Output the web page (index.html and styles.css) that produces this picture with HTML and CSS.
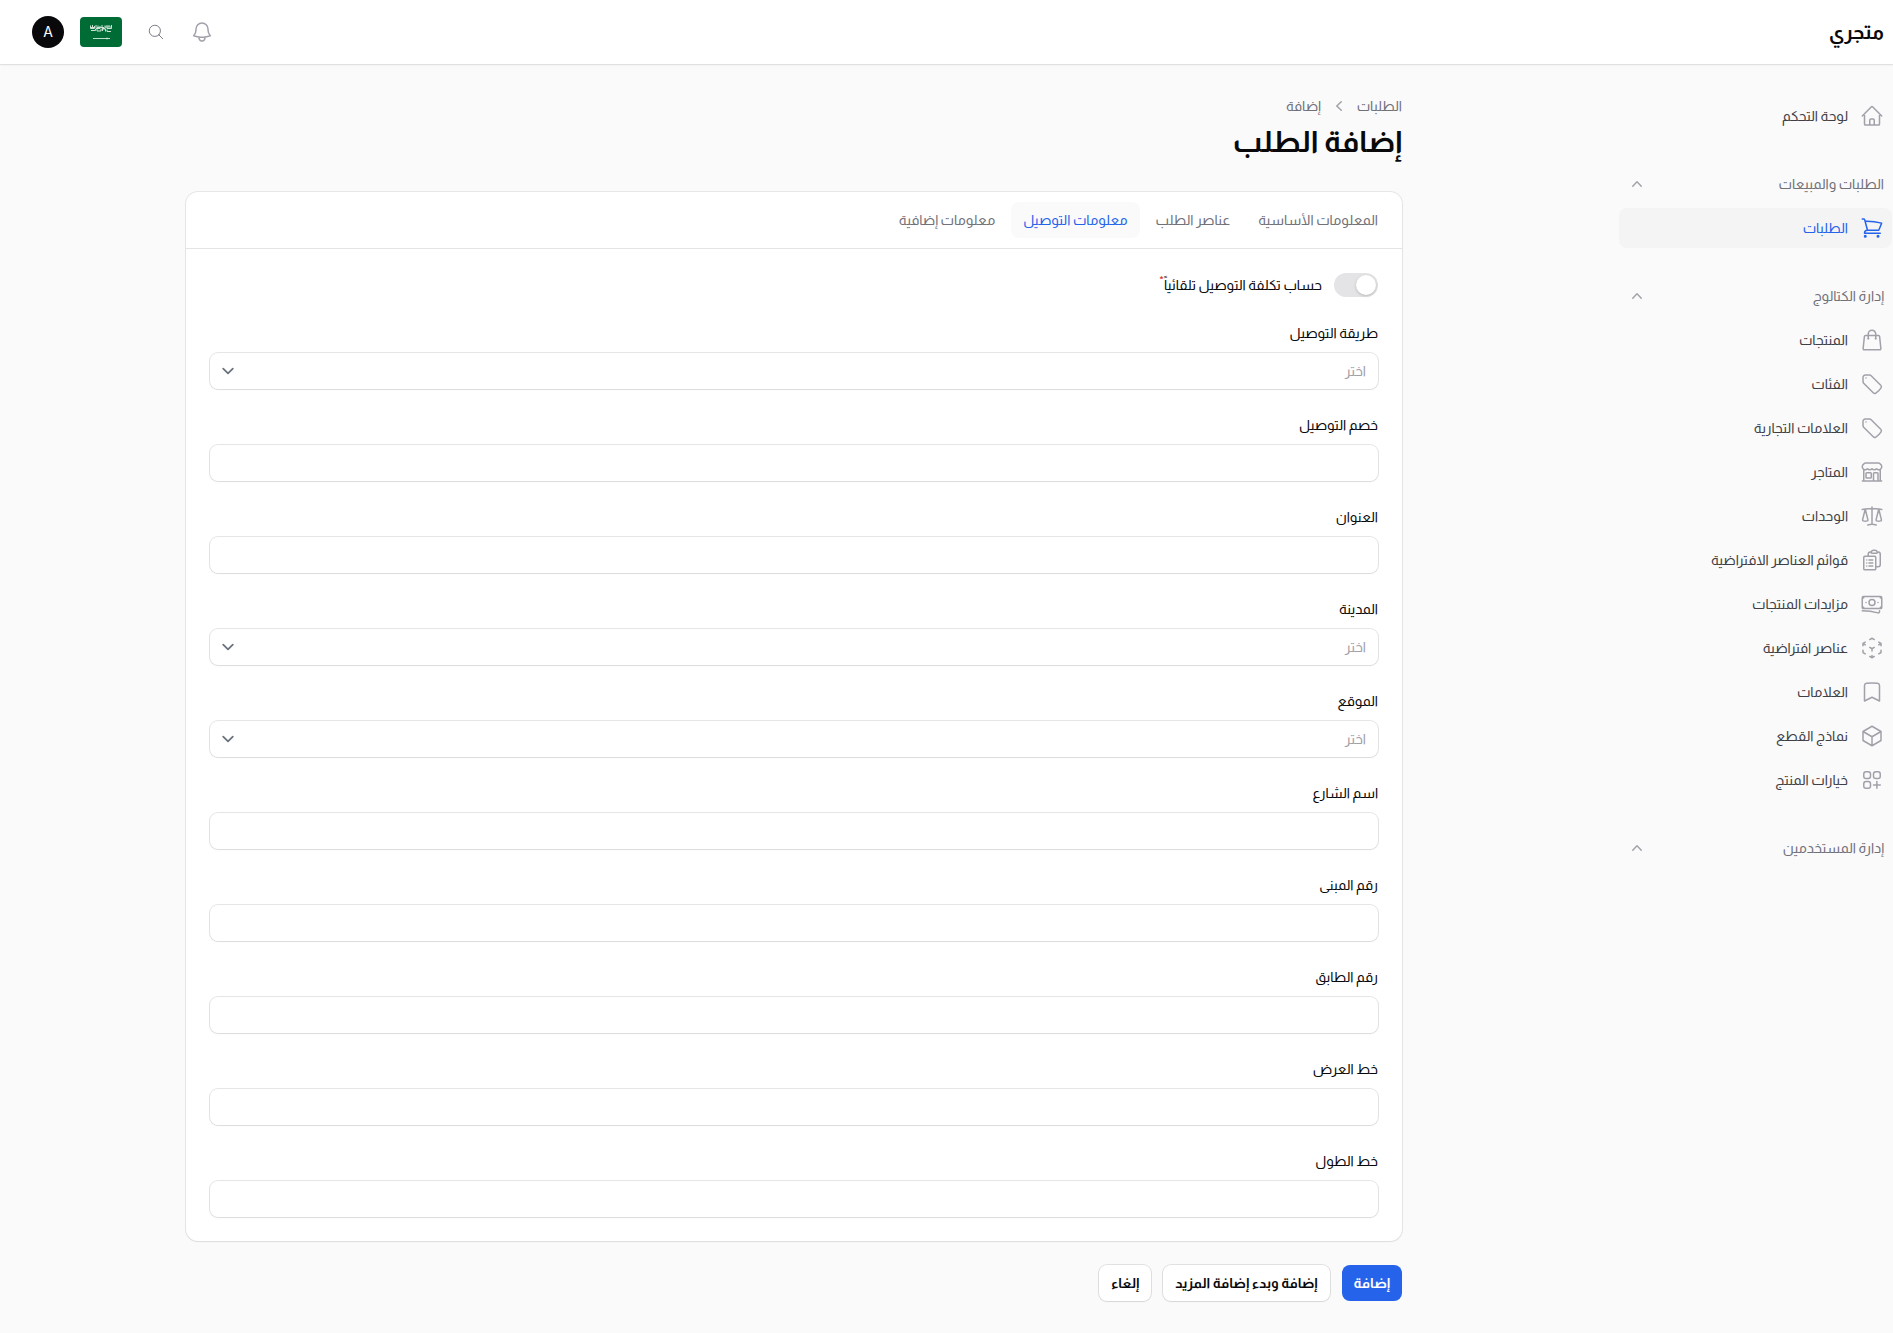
FILE: index.html
```html
<!DOCTYPE html>
<html lang="ar" dir="rtl">

<head>
    <meta charset="UTF-8">
    <meta name="viewport" content="width=device-width, initial-scale=1">
    <title>إضافة الطلب - متجري</title>
    <link rel="stylesheet" href="styles.css">
</head>

<body>
    <header class="topbar">
        <a href="#" class="brand">متجري</a>
        <div class="topbar-actions">
            <div class="topbar-tools">
                <button type="button" class="icon-button" aria-label="الإشعارات">
                    <svg class="icon" viewBox="0 0 24 24"><path d="M14.857 17.082a23.848 23.848 0 005.454-1.31A8.967 8.967 0 0118 9.75v-.7V9A6 6 0 006 9v.75a8.967 8.967 0 01-2.312 6.022c1.733.64 3.56 1.085 5.455 1.31m5.714 0a24.255 24.255 0 01-5.714 0m5.714 0a3 3 0 11-5.714 0"/></svg>
                </button>
                <button type="button" class="icon-button" aria-label="بحث">
                    <svg class="icon icon-search" viewBox="0 0 24 24"><path d="M21 21l-5.197-5.197m0 0A7.5 7.5 0 105.196 5.196a7.5 7.5 0 0010.607 10.607z"/></svg>
                </button>
            </div>
            <button type="button" class="flag" aria-label="العربية">
                <svg viewBox="0 0 42 30">
                    <rect width="42" height="30" fill="#006c35"/>
                    <g fill="none" stroke="#fff" stroke-width="1" opacity=".8">
                        <path d="M10.500 8.500v3h4v-2.500M12.500 8v2M16 8v3.500h4V9M18 8.500v2M22 8v3.500h3V8.500M27 8v3.500h4.500V8"/>
                        <path d="M11 13.500h4.500v-1.500M17 12v2h4v-2M22.500 14v-2h3v2.500M27 12.500v2h4"/>
                        <path d="M10 10.500h5M17 10.500h7M25 10h6M29 8v2"/>
                    </g>
                    <path d="M13 21.500h17" stroke="#fff" stroke-width="1" opacity=".75"/>
                    <path d="M27 20.500v2" stroke="#fff" stroke-width="1" opacity=".6"/>
                </svg>
            </button>
            <button type="button" class="avatar">A</button>
        </div>
    </header>

    <div class="layout">
        <aside class="sidebar">
            <nav>
                <ul class="nav-list">
                    <li><a href="#" class="nav-item">
                        <svg class="icon" viewBox="0 0 24 24"><path d="M2.25 12l8.954-8.955c.44-.439 1.152-.439 1.591 0L21.75 12M4.5 9.75v10.125c0 .621.504 1.125 1.125 1.125H9.75v-4.875c0-.621.504-1.125 1.125-1.125h2.25c.621 0 1.125.504 1.125 1.125V21h4.125c.621 0 1.125-.504 1.125-1.125V9.75M8.25 21h8.25"/></svg>
                        <span>لوحة التحكم</span></a></li>
                </ul>

                <button type="button" class="nav-group">
                    <span>الطلبات والمبيعات</span>
                    <svg class="icon-mini" viewBox="0 0 20 20"><path d="M14.77 12.79a.75.75 0 01-1.06-.02L10 8.832 6.29 12.77a.75.75 0 11-1.08-1.04l4.25-4.5a.75.75 0 011.08 0l4.25 4.5a.75.75 0 01-.02 1.06z"/></svg>
                </button>
                <ul class="nav-list">
                    <li><a href="#" class="nav-item active">
                        <svg class="icon" viewBox="0 0 24 24"><path d="M2.25 3h1.386c.51 0 .955.343 1.087.835l.383 1.437M7.5 14.25a3 3 0 00-3 3h15.75m-12.75-3h11.218c1.121-2.3 2.1-4.684 2.924-7.138a60.114 60.114 0 00-16.536-1.84M7.5 14.25L5.106 5.272M6 20.25a.75.75 0 11-1.5 0 .75.75 0 011.5 0zm12.75 0a.75.75 0 11-1.5 0 .75.75 0 011.5 0z"/></svg>
                        <span>الطلبات</span></a></li>
                </ul>

                <button type="button" class="nav-group">
                    <span>إدارة الكتالوج</span>
                    <svg class="icon-mini" viewBox="0 0 20 20"><path d="M14.77 12.79a.75.75 0 01-1.06-.02L10 8.832 6.29 12.77a.75.75 0 11-1.08-1.04l4.25-4.5a.75.75 0 011.08 0l4.25 4.5a.75.75 0 01-.02 1.06z"/></svg>
                </button>
                <ul class="nav-list">
                    <li><a href="#" class="nav-item">
                        <svg class="icon" viewBox="0 0 24 24"><path d="M15.75 10.5V6a3.75 3.75 0 10-7.5 0v4.5m11.356-1.993l1.263 12c.07.665-.45 1.243-1.119 1.243H4.25a1.125 1.125 0 01-1.12-1.243l1.264-12A1.125 1.125 0 015.513 7.5h12.974c.576 0 1.059.435 1.119 1.007zM8.625 10.5a.375.375 0 11-.75 0 .375.375 0 01.75 0zm7.5 0a.375.375 0 11-.75 0 .375.375 0 01.75 0z"/></svg>
                        <span>المنتجات</span></a></li>
                    <li><a href="#" class="nav-item">
                        <svg class="icon" viewBox="0 0 24 24"><path d="M9.568 3H5.25A2.25 2.25 0 003 5.25v4.318c0 .597.237 1.17.659 1.591l9.581 9.581c.699.699 1.78.872 2.607.33a18.095 18.095 0 005.223-5.223c.542-.827.369-1.908-.33-2.607L11.16 3.66A2.25 2.25 0 009.568 3z"/><path d="M6 6h.008v.008H6V6z"/></svg>
                        <span>الفئات</span></a></li>
                    <li><a href="#" class="nav-item">
                        <svg class="icon" viewBox="0 0 24 24"><path d="M9.568 3H5.25A2.25 2.25 0 003 5.25v4.318c0 .597.237 1.17.659 1.591l9.581 9.581c.699.699 1.78.872 2.607.33a18.095 18.095 0 005.223-5.223c.542-.827.369-1.908-.33-2.607L11.16 3.66A2.25 2.25 0 009.568 3z"/><path d="M6 6h.008v.008H6V6z"/></svg>
                        <span>العلامات التجارية</span></a></li>
                    <li><a href="#" class="nav-item">
                        <svg class="icon" viewBox="0 0 24 24"><path d="M13.5 21v-7.5a.75.75 0 01.75-.75h3a.75.75 0 01.75.75V21m-4.5 0H2.36m11.14 0H18m0 0h3.64m-1.39 0V9.349m-16.5 11.65V9.35m0 0a3.001 3.001 0 003.75-.615A2.993 2.993 0 009.75 9.75c.896 0 1.7-.393 2.25-1.016a2.993 2.993 0 002.25 1.016c.896 0 1.7-.393 2.25-1.016a3.001 3.001 0 003.75.614m-16.5 0a3.004 3.004 0 01-.621-4.72L4.318 3.44A1.5 1.5 0 015.378 3h13.243a1.5 1.5 0 011.06.44l1.19 1.189a3 3 0 01-.621 4.72m-13.5 8.65h3.75a.75.75 0 00.75-.75V13.5a.75.75 0 00-.75-.75H6.75a.75.75 0 00-.75.75v3.75c0 .415.336.75.75.75z"/></svg>
                        <span>المتاجر</span></a></li>
                    <li><a href="#" class="nav-item">
                        <svg class="icon" viewBox="0 0 24 24"><path d="M12 3v17.25m0 0c-1.472 0-2.882.265-4.185.75M12 20.25c1.472 0 2.882.265 4.185.75M18.75 4.97A48.416 48.416 0 0012 4.5c-2.291 0-4.545.16-6.75.47m13.5 0c1.01.143 2.01.317 3 .52m-3-.52l2.62 10.726c.122.499-.106 1.028-.589 1.202a5.988 5.988 0 01-2.031.352 5.988 5.988 0 01-2.031-.352c-.483-.174-.711-.703-.59-1.202L18.75 4.971zm-16.5.52c.99-.203 1.99-.377 3-.52m0 0l2.62 10.726c.122.499-.106 1.028-.589 1.202a5.989 5.989 0 01-2.031.352 5.989 5.989 0 01-2.031-.352c-.483-.174-.711-.703-.59-1.202L5.25 4.971z"/></svg>
                        <span>الوحدات</span></a></li>
                    <li><a href="#" class="nav-item">
                        <svg class="icon" viewBox="0 0 24 24"><path d="M9 12h3.75M9 15h3.75M9 18h3.75m3 .75H18a2.25 2.25 0 002.25-2.25V6.108c0-1.135-.845-2.098-1.976-2.192a48.424 48.424 0 00-1.123-.08m-5.801 0c-.065.21-.1.433-.1.664 0 .414.336.75.75.75h4.5a.75.75 0 00.75-.75 2.25 2.25 0 00-.1-.664m-5.8 0A2.251 2.251 0 0113.5 2.25H15c1.012 0 1.867.668 2.15 1.586m-5.8 0c-.376.023-.75.05-1.124.08C9.095 4.01 8.25 4.973 8.25 6.108V8.25m0 0H4.875c-.621 0-1.125.504-1.125 1.125v11.25c0 .621.504 1.125 1.125 1.125h9.75c.621 0 1.125-.504 1.125-1.125V9.375c0-.621-.504-1.125-1.125-1.125H8.25zM6.75 12h.008v.008H6.75V12zm0 3h.008v.008H6.75V15zm0 3h.008v.008H6.75V18z"/></svg>
                        <span>قوائم العناصر الافتراضية</span></a></li>
                    <li><a href="#" class="nav-item">
                        <svg class="icon" viewBox="0 0 24 24"><path d="M2.25 18.75a60.07 60.07 0 0115.797 2.101c.727.198 1.453-.342 1.453-1.096V18.75M3.75 4.5v.75A.75.75 0 013 6h-.75m0 0v-.375c0-.621.504-1.125 1.125-1.125H20.25M2.25 6v9m18-10.5v.75c0 .414.336.75.75.75h.75m-1.5-1.5h.375c.621 0 1.125.504 1.125 1.125v9.75c0 .621-.504 1.125-1.125 1.125h-.375m1.5-1.5H21a.75.75 0 00-.75.75v.75m0 0H3.75m0 0h-.375a1.125 1.125 0 01-1.125-1.125V15m1.5 1.5v-.75A.75.75 0 003 15h-.75M15 10.5a3 3 0 11-6 0 3 3 0 016 0zm3 0h.008v.008H18V10.5zm-12 0h.008v.008H6V10.5z"/></svg>
                        <span>مزايدات المنتجات</span></a></li>
                    <li><a href="#" class="nav-item">
                        <svg class="icon" viewBox="0 0 24 24"><path d="M21 7.5l-2.25-1.313M21 7.5v2.25m0-2.25l-2.25 1.313M3 7.5l2.25-1.313M3 7.5l2.25 1.313M3 7.5v2.25m9 3l2.25-1.313M12 12.75l-2.25-1.313M12 12.75V15m0 6.75l2.25-1.313M12 21.75V19.5m0 2.25l-2.25-1.313m0-16.875L12 2.25l2.25 1.313M21 14.25v2.25l-2.25 1.313m-13.5 0L3 16.5v-2.25"/></svg>
                        <span>عناصر افتراضية</span></a></li>
                    <li><a href="#" class="nav-item">
                        <svg class="icon" viewBox="0 0 24 24"><path d="M17.593 3.322c1.1.128 1.907 1.077 1.907 2.185V21L12 17.25 4.5 21V5.507c0-1.108.806-2.057 1.907-2.185a48.507 48.507 0 0111.186 0z"/></svg>
                        <span>العلامات</span></a></li>
                    <li><a href="#" class="nav-item">
                        <svg class="icon" viewBox="0 0 24 24"><path d="M21 7.5l-9-5.25L3 7.5m18 0l-9 5.25m9-5.25v9l-9 5.25M3 7.5l9 5.25M3 7.5v9l9 5.25m0-9v9"/></svg>
                        <span>نماذج القطع</span></a></li>
                    <li><a href="#" class="nav-item">
                        <svg class="icon" viewBox="0 0 24 24"><path d="M13.5 16.875h3.375m0 0h3.375m-3.375 0V13.5m0 3.375v3.375M6 10.5h2.25a2.25 2.25 0 002.25-2.25V6a2.25 2.25 0 00-2.25-2.25H6A2.25 2.25 0 003.75 6v2.25A2.25 2.25 0 006 10.5zm0 9.75h2.25A2.25 2.25 0 0010.5 18v-2.25a2.25 2.25 0 00-2.25-2.25H6a2.25 2.25 0 00-2.25 2.25V18A2.25 2.25 0 006 20.25zm9.75-9.75H18a2.25 2.25 0 002.25-2.25V6A2.25 2.25 0 0018 3.75h-2.25A2.25 2.25 0 0013.5 6v2.25a2.25 2.25 0 002.25 2.25z"/></svg>
                        <span>خيارات المنتج</span></a></li>
                </ul>

                <button type="button" class="nav-group">
                    <span>إدارة المستخدمين</span>
                    <svg class="icon-mini" viewBox="0 0 20 20"><path d="M14.77 12.79a.75.75 0 01-1.06-.02L10 8.832 6.29 12.77a.75.75 0 11-1.08-1.04l4.25-4.5a.75.75 0 011.08 0l4.25 4.5a.75.75 0 01-.02 1.06z"/></svg>
                </button>
            </nav>
        </aside>

        <main class="main">
            <nav class="breadcrumbs">
                <a href="#">الطلبات</a>
                <svg class="icon-mini" viewBox="0 0 20 20"><path d="M12.79 5.23a.75.75 0 01-.02 1.06L8.832 10l3.938 3.71a.75.75 0 11-1.04 1.08l-4.5-4.25a.75.75 0 010-1.08l4.5-4.25a.75.75 0 011.06.02z"/></svg>
                <a href="#">إضافة</a>
            </nav>
            <h1>إضافة الطلب</h1>

            <form>
                <div class="card">
                    <div class="tabs" role="tablist">
                        <button type="button" class="tab" role="tab">المعلومات الأساسية</button>
                        <button type="button" class="tab" role="tab">عناصر الطلب</button>
                        <button type="button" class="tab active" role="tab" aria-selected="true">معلومات التوصيل</button>
                        <button type="button" class="tab" role="tab">معلومات إضافية</button>
                    </div>
                    <div class="fields">
                        <div class="toggle-row">
                            <input type="checkbox" role="switch" class="toggle" id="autoCost">
                            <label for="autoCost">حساب تكلفة التوصيل تلقائياً<sup>*</sup></label>
                        </div>
                        <div class="field">
                            <label for="method">طريقة التوصيل</label>
                            <select id="method"><option>اختر</option></select>
                        </div>
                        <div class="field">
                            <label for="discount">خصم التوصيل</label>
                            <input type="text" id="discount">
                        </div>
                        <div class="field">
                            <label for="address">العنوان</label>
                            <input type="text" id="address">
                        </div>
                        <div class="field">
                            <label for="city">المدينة</label>
                            <select id="city"><option>اختر</option></select>
                        </div>
                        <div class="field">
                            <label for="location">الموقع</label>
                            <select id="location"><option>اختر</option></select>
                        </div>
                        <div class="field">
                            <label for="street">اسم الشارع</label>
                            <input type="text" id="street">
                        </div>
                        <div class="field">
                            <label for="building">رقم المبنى</label>
                            <input type="text" id="building">
                        </div>
                        <div class="field">
                            <label for="floor">رقم الطابق</label>
                            <input type="text" id="floor">
                        </div>
                        <div class="field">
                            <label for="latitude">خط العرض</label>
                            <input type="text" id="latitude">
                        </div>
                        <div class="field">
                            <label for="longitude">خط الطول</label>
                            <input type="text" id="longitude">
                        </div>
                    </div>
                </div>
                <div class="form-actions">
                    <button type="submit" class="btn btn-primary">إضافة</button>
                    <button type="button" class="btn">إضافة وبدء إضافة المزيد</button>
                    <button type="button" class="btn">إلغاء</button>
                </div>
            </form>
        </main>
    </div>
</body>

</html>
```
FILE: styles.css
```css
* {
    box-sizing: border-box;
}

body {
    margin: 0;
    background-color: #fafafa;
    color: #09090b;
    font-family: Almarai, Cairo, "Noto Sans", sans-serif;
    font-size: 14px;
    line-height: 24px;
}

a {
    color: inherit;
    text-decoration: none;
}

button,
input,
select {
    font: inherit;
    color: inherit;
}

button {
    border: none;
    background: none;
    padding: 0;
    cursor: pointer;
}

.icon {
    width: 24px;
    height: 24px;
    flex-shrink: 0;
    fill: none;
    stroke: #a1a1aa;
    stroke-width: 1.5;
    stroke-linecap: round;
    stroke-linejoin: round;
}

.icon-mini {
    width: 20px;
    height: 20px;
    fill: #a1a1aa;
}

/* Top bar */
.topbar {
    height: 64px;
    padding: 0 9px 0 32px;
    display: flex;
    align-items: center;
    justify-content: space-between;
    background-color: #fff;
    box-shadow: 0 0 0 1px rgba(9, 9, 11, 0.05), 0 1px 2px rgba(0, 0, 0, 0.08);
}

.brand {
    font-size: 20px;
    font-weight: 700;
}

.topbar-actions {
    display: flex;
    align-items: center;
    gap: 16px;
}

.topbar-tools {
    display: flex;
    gap: 10px;
}

.icon-button {
    width: 36px;
    height: 36px;
    display: flex;
    align-items: center;
    justify-content: center;
}

.icon-search {
    width: 18px;
    height: 18px;
    stroke: #71717a;
    stroke-width: 1.2;
}

.flag {
    width: 42px;
    height: 30px;
    border-radius: 4px;
    overflow: hidden;
}

.flag svg {
    display: block;
}

.avatar {
    width: 32px;
    height: 32px;
    border-radius: 50%;
    background-color: #09090b;
    color: #fff;
    font-family: Inter, sans-serif;
}

/* Sidebar */
.layout {
    display: flex;
}

.sidebar {
    width: 305px;
    flex-shrink: 0;
    padding: 32px 1px 32px 31px;
}

.nav-list {
    list-style: none;
    margin: 0;
    padding: 0;
    display: flex;
    flex-direction: column;
    gap: 4px;
}

.nav-item {
    display: flex;
    align-items: center;
    gap: 12px;
    padding: 8px;
    border-radius: 8px;
    font-weight: 500;
    color: #3f3f46;
}

.nav-item.active {
    background-color: #f4f4f5;
    color: #2563eb;
}

.nav-item.active .icon {
    stroke: #2563eb;
}

.nav-group {
    width: 100%;
    margin: 28px 0 4px;
    padding: 8px;
    display: flex;
    align-items: center;
    justify-content: space-between;
    font-weight: 500;
    color: #71717a;
}

/* Page */
.main {
    flex: 1;
    max-width: 1280px;
    margin: 0 auto;
    padding: 32px;
}

.breadcrumbs {
    display: flex;
    align-items: center;
    gap: 8px;
    line-height: 20px;
    font-weight: 500;
    color: #71717a;
}

h1 {
    margin: 8px 0 32px;
    font-size: 30px;
    line-height: 36px;
    font-weight: 700;
}

.card {
    background-color: #fff;
    border-radius: 12px;
    box-shadow: 0 0 0 1px rgba(9, 9, 11, 0.08), 0 1px 2px rgba(0, 0, 0, 0.05);
}

.tabs {
    display: flex;
    gap: 4px;
    padding: 10px 12px;
    border-bottom: 1px solid #e4e4e7;
}

.tab {
    padding: 8px 12px;
    border-radius: 8px;
    line-height: 20px;
    font-weight: 500;
    color: #71717a;
}

.tab.active {
    background-color: #fafafa;
    color: #2563eb;
}

.fields {
    display: flex;
    flex-direction: column;
    gap: 24px;
    padding: 24px;
}

.fields label {
    font-weight: 500;
}

.toggle-row {
    display: flex;
    align-items: center;
    gap: 12px;
    height: 24px;
}

.toggle-row sup {
    color: #dc2626;
    font-size: 12px;
    line-height: 0;
}

.toggle {
    appearance: none;
    width: 44px;
    height: 24px;
    margin: 0;
    padding: 2px;
    border-radius: 12px;
    background-color: #e4e4e7;
    cursor: pointer;
}

.toggle::before {
    content: "";
    display: block;
    width: 20px;
    height: 20px;
    border-radius: 50%;
    background-color: #fff;
    box-shadow: 0 1px 3px rgba(0, 0, 0, 0.2);
}

.toggle:checked {
    background-color: #2563eb;
}

.toggle:checked::before {
    margin-right: 20px;
}

.field {
    display: flex;
    flex-direction: column;
    gap: 8px;
}

.field input,
.field select {
    width: 100%;
    height: 36px;
    padding: 0 12px;
    border: none;
    border-radius: 8px;
    background-color: #fff;
    box-shadow: 0 0 0 1px rgba(9, 9, 11, 0.1), 0 1px 2px rgba(0, 0, 0, 0.05);
}

.field select {
    appearance: none;
    color: #a1a1aa;
    background-image: url("data:image/svg+xml,%3Csvg xmlns='http://www.w3.org/2000/svg' fill='none' viewBox='0 0 20 20'%3E%3Cpath stroke='%236b7280' stroke-linecap='round' stroke-linejoin='round' stroke-width='1.5' d='M6 8l4 4 4-4'/%3E%3C/svg%3E");
    background-repeat: no-repeat;
    background-position: left 6px center;
    background-size: 24px;
}

.form-actions {
    display: flex;
    gap: 12px;
    margin-top: 24px;
}

.btn {
    padding: 8px 12px;
    border-radius: 8px;
    line-height: 20px;
    font-weight: 700;
    background-color: #fff;
    box-shadow: 0 0 0 1px rgba(9, 9, 11, 0.1), 0 1px 2px rgba(0, 0, 0, 0.05);
}

.btn-primary {
    background-color: #2563eb;
    color: #fff;
    box-shadow: none;
}
```
